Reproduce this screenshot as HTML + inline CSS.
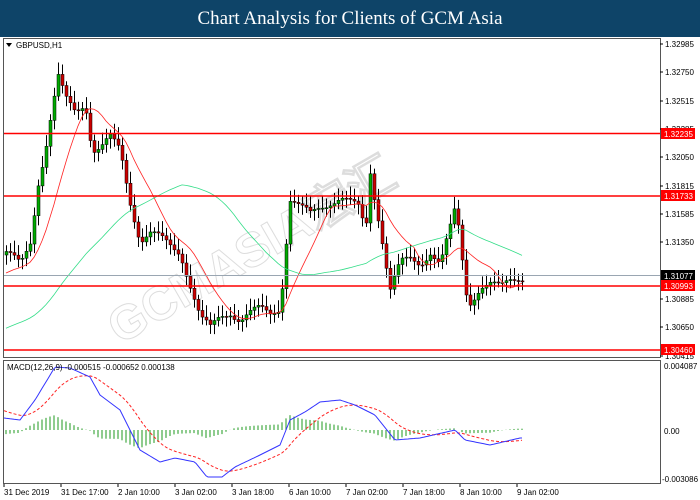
<!DOCTYPE html>
<html><head><meta charset="utf-8"><style>
body{margin:0;width:700px;height:500px;background:#fff;overflow:hidden;font-family:"Liberation Sans",sans-serif}
#hd{position:absolute;left:0;top:0;width:700px;height:37px;background:#0e4468;color:#fff;font-family:"Liberation Serif",serif;font-size:19px;text-align:center;line-height:37px}
svg{position:absolute;left:0;top:0}
text{font-family:"Liberation Sans",sans-serif;font-size:8px;fill:#000}
</style></head><body>
<div id="hd">Chart Analysis for Clients of GCM Asia</div>
<svg id="s" width="700" height="500">
<rect x="3.5" y="38.5" width="657" height="319" fill="none" stroke="#555"/>
<rect x="3.5" y="360.5" width="657" height="123" fill="none" stroke="#555"/>
<text x="120" y="345" transform="rotate(-30 120 345)" style="font-size:48px;fill:none;stroke:#ddd;stroke-width:1;font-weight:bold">GCMASIA宏汇</text>
<g id="c"></g>
<line x1="4" y1="275.5" x2="660" y2="275.5" stroke="#9aa6b2"/>
<line x1="4" y1="133.5" x2="660" y2="133.5" stroke="#f00" stroke-width="1.5"/>
<line x1="4" y1="196" x2="660" y2="196" stroke="#f00" stroke-width="1.5"/>
<line x1="4" y1="286" x2="660" y2="286" stroke="#f00" stroke-width="1.5"/>
<line x1="4" y1="350" x2="660" y2="350" stroke="#f00" stroke-width="1.5"/>
<polygon points="6,43 12,43 9,47" fill="#000"/>
<text x="16" y="48">GBPUSD,H1</text>
<text x="7" y="370">MACD(12,26,9) -0.000515 -0.000652 0.000138</text>
<g id="ax"></g>
<rect x="661" y="128" width="34" height="11" fill="#f00"/><text x="664" y="137" style="fill:#fff">1.32235</text>
<rect x="661" y="190" width="34" height="11" fill="#f00"/><text x="664" y="199" style="fill:#fff">1.31733</text>
<rect x="661" y="270" width="34" height="11" fill="#000"/><text x="664" y="279" style="fill:#fff">1.31077</text>
<rect x="661" y="280" width="34" height="11" fill="#f00"/><text x="664" y="289" style="fill:#fff">1.30993</text>
<rect x="661" y="344" width="34" height="11" fill="#f00"/><text x="664" y="353" style="fill:#fff">1.30460</text>
<text x="664" y="369">0.004087</text><text x="664" y="434">0.00</text><text x="662" y="482">-0.003086</text>
<g id="tm"></g>
</svg>
<script>
var NS="http://www.w3.org/2000/svg";
function el(p,t,a){var e=document.createElementNS(NS,t);for(var k in a)e.setAttribute(k,a[k]);p.appendChild(e);return e;}
var kp=[[5,255],[20,265],[30,240],[38,180],[45,150],[52,110],[58,80],[65,100],[75,110],[85,100],[92,150],[100,150],[110,140],[120,150],[130,200],[140,240],[150,235],[160,240],[170,245],[180,250],[190,285],[200,320],[210,330],[220,315],[230,310],[240,320],[250,315],[260,310],[270,312],[280,305],[285,250],[290,200],[300,210],[310,215],[320,205],[330,200],[340,198],[350,205],[360,210],[365,235],[370,170],[375,200],[380,225],[385,260],[390,290],[400,265],[410,260],[420,262],[430,250],[440,265],[450,230],[455,210],[460,240],[465,290],[470,300],[480,285],[490,285],[500,290],[510,280],[520,275]];
function f(x){for(var i=1;i<kp.length;i++)if(x<=kp[i][0]){var a=kp[i-1],b=kp[i];return a[1]+(b[1]-a[1])*(x-a[0])/(b[0]-a[0]);}return 275;}
var c=document.getElementById('c');var prev=f(5);var cl=[];
for(var x=6;x<=522;x+=4){var y=f(x)+Math.sin(x*1.7)*6;var o=prev,h=Math.min(o,y)-4-Math.abs(Math.sin(x))*8,l=Math.max(o,y)+4+Math.abs(Math.cos(x))*6;
el(c,'line',{x1:x+.5,x2:x+.5,y1:h,y2:l,stroke:'#000'});
el(c,'rect',{x:x-1,y:Math.min(o,y),width:3,height:Math.max(1,Math.abs(o-y)),fill:y<o?'#0a0':'#c00',stroke:'#000','stroke-width':.5});
cl.push([x,y]);prev=y;}
function ma(n,seed){var p=[];for(var i=0;i<cl.length;i++){var s=0,k=0;for(var j=i-n+1;j<=i;j++){s+=j<0?seed:cl[j][1];k++;}p.push(cl[i][0]+','+(s/k).toFixed(1));}return p.join(' ');}
el(c,'polyline',{points:ma(12,275),fill:'none',stroke:'#f22','stroke-width':.8});
el(c,'polyline',{points:ma(45,330),fill:'none',stroke:'#3d8','stroke-width':.8});
var bl=[[4,418],[20,420],[35,400],[55,367],[70,368],[90,377],[100,395],[120,410],[140,450],[160,462],[175,458],[195,462],[207,477],[222,477],[235,467],[260,455],[280,445],[290,420],[305,412],[320,402],[340,400],[355,405],[375,415],[395,440],[420,438],[455,430],[465,440],[490,445],[520,438]];
function bv(x){for(var i=1;i<bl.length;i++)if(x<=bl[i][0]){var t=(x-bl[i-1][0])/(bl[i][0]-bl[i-1][0]);return bl[i-1][1]+(bl[i][1]-bl[i-1][1])*t;}return 438;}
var rp=[],r=410,bp=[];
for(var x=4;x<=522;x+=2){var b=bv(x);r+= (b-r)*0.09;rp.push([x,r]);bp.push([x,b]);
if((x-6)%4==0){var h=(r-b)*0.6;el(c,'line',{x1:x,x2:x,y1:430,y2:430-h,stroke:'#4a4','stroke-width':1.2});}}
function pl(a){return a.map(function(p){return p[0]+','+p[1].toFixed(1)}).join(' ');}
el(c,'polyline',{points:pl(rp),fill:'none',stroke:'#f22','stroke-dasharray':'3,2'});
el(c,'polyline',{points:pl(bp),fill:'none',stroke:'#33f'});
var ax=document.getElementById('ax');
[['1.32985',44],['1.32750',72],['1.32515',101],['1.32285',129],['1.32050',157],['1.31815',186],['1.31585',214],['1.31350',242],['1.30885',299],['1.30650',327],['1.30415',356]].forEach(function(a){el(ax,'line',{x1:660,x2:663,y1:a[1],y2:a[1],stroke:'#000'});var t=el(ax,'text',{x:665,y:a[1]+3});t.textContent=a[0];});
var tm=document.getElementById('tm');
[['31 Dec 2019',2],['31 Dec 17:00',59],['2 Jan 10:00',116],['3 Jan 02:00',173],['3 Jan 18:00',230],['6 Jan 10:00',287],['7 Jan 02:00',344],['7 Jan 18:00',401],['8 Jan 10:00',458],['9 Jan 02:00',515]].forEach(function(a){el(tm,'line',{x1:a[1]+2,x2:a[1]+2,y1:484,y2:487,stroke:'#000'});var t=el(tm,'text',{x:a[1]+2,y:495});t.textContent=a[0];});
</script>
</body></html>
